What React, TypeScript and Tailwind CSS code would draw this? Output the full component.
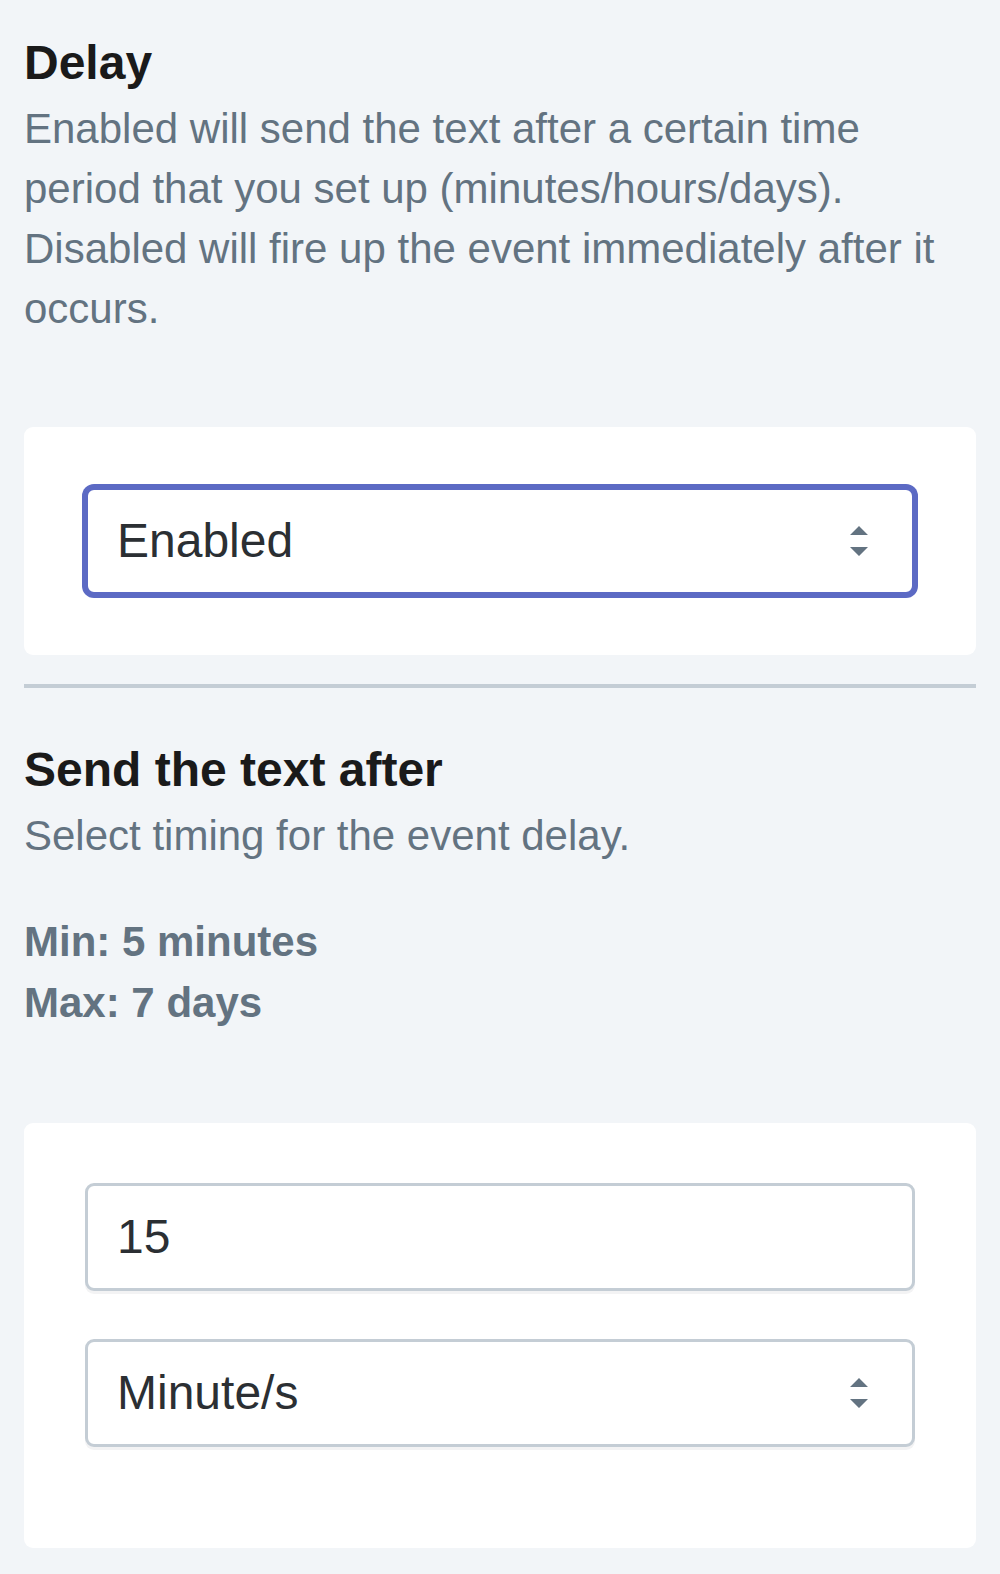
function SelectArrows() {
  return (
    <svg width="18" height="30" viewBox="0 0 18 30" className="shrink-0">
      <path d="M0 9 L9 0 L18 9 Z M0 21 L18 21 L9 30 Z" fill="#637381" />
    </svg>
  );
}

function SelectBox({ value, focused }: { value: string; focused?: boolean }) {
  return (
    <div
      className={
        focused
          ? "flex h-[108px] items-center justify-between rounded-[9px] border-[3px] border-[#5c6ac4] bg-white pl-[29px] pr-[44px] shadow-[0_0_0_3px_#5c6ac4]"
          : "flex h-[108px] items-center justify-between rounded-[9px] border-[3px] border-[#c4cdd5] bg-white pl-[29px] pr-[44px] shadow-[0_3px_0_0_rgba(22,29,37,0.05)]"
      }
    >
      <span className="text-[48px] leading-none text-[#2b2f33]">{value}</span>
      <SelectArrows />
    </div>
  );
}

function TextBox({ value }: { value: string }) {
  return (
    <div className="flex h-[108px] items-center rounded-[9px] border-[3px] border-[#c4cdd5] bg-white pl-[29px] shadow-[0_3px_0_0_rgba(22,29,37,0.05)]">
      <span className="text-[48px] leading-none text-[#2b2f33]">{value}</span>
    </div>
  );
}

export default function App() {
  return (
    <div
      className="min-h-[1574px] bg-[#f2f5f8] px-[24px] pt-[27px] pb-[26px]"
      style={{ fontFamily: '"Liberation Sans", Arial, sans-serif' }}
    >
      <h2 className="text-[48px] font-bold leading-[72px] text-[#1a1a1a]">Delay</h2>
      <p className="text-[42px] leading-[60px] text-[#637381]">
        Enabled will send the text after a certain time period that you set up (minutes/hours/days).
        Disabled will fire up the event immediately after it occurs.
      </p>

      <div className="mt-[88px] rounded-[9px] bg-white px-[61px] py-[60px]">
        <SelectBox value="Enabled" focused />
      </div>

      <div className="mt-[29px] h-[4px] bg-[#c4cdd5]" />

      <h2 className="mt-[46px] text-[48px] font-bold leading-[72px] text-[#1a1a1a]">
        Send the text after
      </h2>
      <p className="text-[42px] leading-[60px] text-[#637381]">Select timing for the event delay.</p>

      <div className="mt-[45px] text-[42px] font-bold leading-[61px] text-[#637381]">
        <p>Min: 5 minutes</p>
        <p>Max: 7 days</p>
      </div>

      <div className="mt-[90px] flex flex-col gap-[48px] rounded-[9px] bg-white px-[61px] pt-[60px] pb-[101px]">
        <TextBox value="15" />
        <SelectBox value="Minute/s" />
      </div>
    </div>
  );
}
